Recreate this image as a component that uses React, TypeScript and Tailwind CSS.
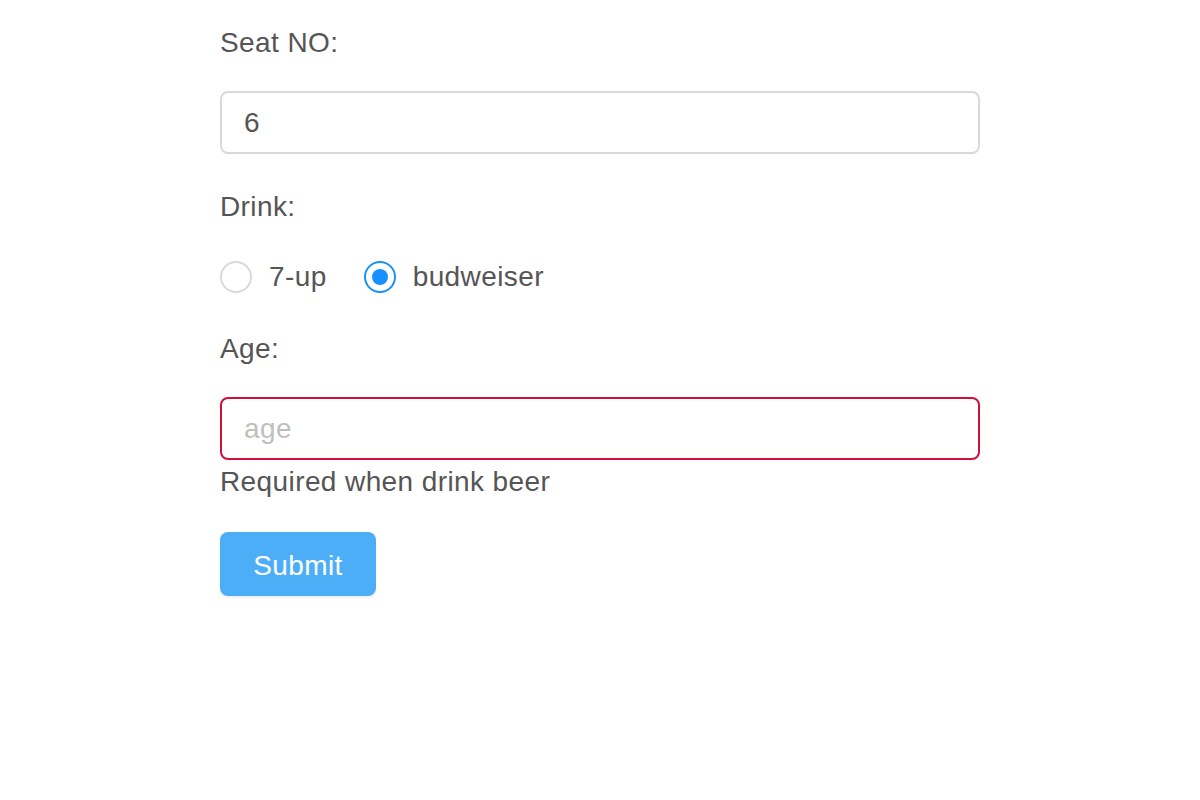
import { useState } from 'react';

// 注文フォーム（座席・ドリンク・年齢）
export default function App() {
  const [seat, setSeat] = useState('6');
  const [drink, setDrink] = useState<'7-up' | 'budweiser'>('budweiser');
  const [age, setAge] = useState('');

  const font = { fontFamily: '"Liberation Sans", Arial, sans-serif' };

  const Radio = ({ value }: { value: '7-up' | 'budweiser' }) => {
    const checked = drink === value;
    return (
      <label className="flex items-center cursor-pointer" onClick={() => setDrink(value)}>
        <span
          className={
            checked
              ? 'w-[32px] h-[32px] rounded-full border-2 border-[#1890ff] flex items-center justify-center bg-white'
              : 'w-[32px] h-[32px] rounded-full border-2 border-[#d9d9d9] bg-white'
          }
        >
          {checked && <span className="w-[16px] h-[16px] rounded-full bg-[#1890ff]" />}
        </span>
        <span className="ml-[17px]">{value}</span>
      </label>
    );
  };

  return (
    <div className="min-h-[800px] bg-white text-[28px] leading-[40px] tracking-[0.4px] text-[#555555]" style={font}>
      <form className="ml-[220px] w-[760px] pt-[23px]" onSubmit={(e) => e.preventDefault()}>
        <div>Seat NO:</div>
        <input
          value={seat}
          onChange={(e) => setSeat(e.target.value)}
          className="mt-[28px] block w-full h-[63px] rounded-[8px] border-2 border-[#d9d9d9] px-[22px] text-[28px] tracking-[0.4px] text-[#555555] outline-none"
        />

        <div className="mt-[33px]">Drink:</div>
        <div className="mt-[30px] flex items-center gap-[37px]">
          <Radio value="7-up" />
          <Radio value="budweiser" />
        </div>

        <div className="mt-[32px]">Age:</div>
        <input
          value={age}
          onChange={(e) => setAge(e.target.value)}
          placeholder="age"
          className="mt-[28px] block w-full h-[63px] rounded-[8px] border-2 border-[#d0103a] px-[22px] text-[28px] tracking-[0.4px] text-[#555555] placeholder:text-[#bfbfbf] outline-none"
        />
        <div className="mt-[2px]">Required when drink beer</div>

        <button
          type="submit"
          className="mt-[30px] w-[156px] h-[64px] pt-[4px] rounded-[8px] bg-[#4daef8] text-white text-[28px] tracking-[0.4px] shadow-[0_2px_2px_rgba(0,0,0,0.06)]"
        >
          Submit
        </button>
      </form>
    </div>
  );
}
